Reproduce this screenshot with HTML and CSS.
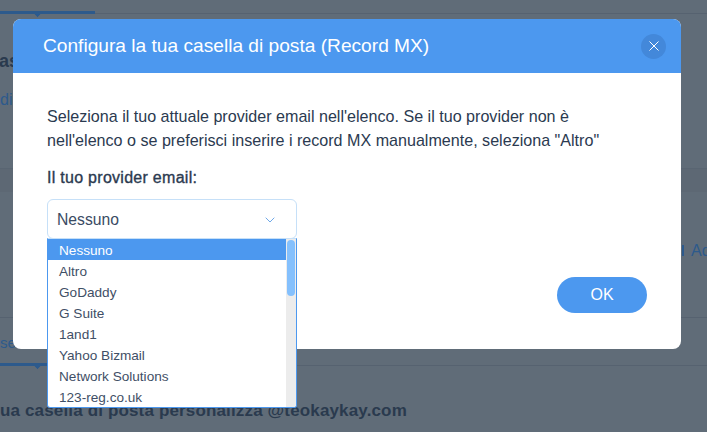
FILE: index.html
```html
<!DOCTYPE html>
<html lang="it">
<head>
<meta charset="utf-8">
<title>Configura la tua casella di posta</title>
<link rel="stylesheet" href="styles.css">
</head>
<body>
<div class="page">
  <div class="tabs tabs-top"><span class="tab-mark tab-mark-top"></span></div>
  <div class="bg-head">as</div>
  <div class="bg-link">di</div>
  <div class="band"></div>
  <div class="bg-row"><span class="bg-tick"></span><span class="bg-add">Add</span></div>
  <div class="bg-foot">se</div>
  <div class="tabs tabs-bottom"><span class="tab-mark tab-mark-bottom"></span></div>
  <div class="bg-title">ua casella di posta personalizza @teokaykay.com</div>
</div>

<section class="modal">
  <header class="modal-header">
    <h1 class="modal-title">Configura la tua casella di posta (Record MX)</h1>
    <button class="close" aria-label="Chiudi">
      <svg class="close-icon" viewBox="0 0 10 10" width="10" height="10"><path d="M0.5 0.5 9.5 9.5M9.5 0.5 0.5 9.5"/></svg>
    </button>
  </header>
  <div class="modal-body">
    <p class="intro">Seleziona il tuo attuale provider email nell'elenco. Se il tuo provider non è<br>nell'elenco o se preferisci inserire i record MX manualmente, seleziona "Altro"</p>
    <div class="label">Il tuo provider email:</div>
    <div class="select">
      <span class="select-value">Nessuno</span>
      <svg class="chevron" viewBox="0 0 10 6" width="10" height="6"><path d="M0.7 0.7 5 5 9.3 0.7"/></svg>
      <div class="dropdown">
        <ul class="options">
          <li class="option selected">Nessuno</li>
          <li class="option">Altro</li>
          <li class="option">GoDaddy</li>
          <li class="option">G Suite</li>
          <li class="option">1and1</li>
          <li class="option">Yahoo Bizmail</li>
          <li class="option">Network Solutions</li>
          <li class="option">123-reg.co.uk</li>
        </ul>
        <div class="scrollbar"><div class="thumb"></div></div>
      </div>
    </div>
    <div class="actions"><button class="ok">OK</button></div>
  </div>
</section>
</body>
</html>
```
FILE: styles.css
```css
html, body {
  margin: 0;
  height: 100%;
  overflow: hidden;
  background: #606c78;
  font-family: "Liberation Sans", Arial, sans-serif;
}
.page {
  height: 432px;
  overflow: hidden;
  color: #2f4058;
}
.tabs {
  position: relative;
  border-bottom: 1px solid #566270;
}
.tabs-top { height: 13px; }
.tabs-bottom { height: 4px; margin-top: 9px; }
.tab-mark {
  position: absolute;
  left: 0;
  bottom: -1px;
  height: 3px;
  background: #2d5a8c;
}
.tab-mark::after {
  content: "";
  position: absolute;
  left: 34px;
  top: -2px;
  width: 7px;
  height: 7px;
  background: #2d5a8c;
  transform: rotate(45deg);
  clip-path: polygon(100% 0, 100% 100%, 0 100%);
}
.tab-mark-top { width: 95px; }
.tab-mark-bottom { width: 48px; }
.bg-head {
  margin-top: 36px;
  font-size: 18px;
  font-weight: 700;
  line-height: 22px;
  color: #2a3a4e;
  margin-left: -1px;
}
.bg-link {
  margin-top: 19px;
  font-size: 16px;
  line-height: 18px;
  color: #2d5a8c;
}
.band {
  height: 24px;
  margin-top: 59px;
  background: #5d6874;
  border-top: 1px solid #596572;
  box-sizing: border-box;
}
.bg-row {
  display: flex;
  justify-content: flex-end;
  align-items: flex-start;
  height: 126px;
  border-bottom: 1px solid #566270;
  box-sizing: border-box;
  padding-top: 50px;
  font-size: 16px;
  line-height: 18px;
  color: #2d5a8c;
  overflow: hidden;
}
.bg-tick {
  flex: none;
  width: 2px;
  height: 11px;
  margin: 3px 7px 0 0;
  background: #2d5a8c;
}
.bg-add {
  flex: none;
  width: 16px;
  overflow: hidden;
}
.bg-foot {
  font-size: 15px;
  line-height: 18px;
  margin-top: 16px;
  color: #2d5a8c;
}
.bg-title {
  margin-top: 34px;
  font-size: 17px;
  font-weight: 700;
  line-height: 22px;
  letter-spacing: 0.15px;
  color: #2a3a4e;
  white-space: nowrap;
}

.modal {
  position: absolute;
  left: 13px;
  top: 19px;
  width: 668px;
  height: 330px;
  background: #fff;
  border-radius: 8px;
}
.modal-header {
  display: flex;
  align-items: center;
  justify-content: space-between;
  height: 54px;
  padding: 0 15px 0 30px;
  background: #4c98ef;
  border-radius: 8px 8px 0 0;
}
.modal-title {
  margin: 0;
  font-size: 19.15px;
  font-weight: 400;
  color: #fff;
}
.close {
  display: flex;
  align-items: center;
  justify-content: center;
  width: 25px;
  height: 25px;
  padding: 0;
  border: 0;
  border-radius: 50%;
  background: #4388da;
}
.close-icon path {
  fill: none;
  stroke: #fff;
  stroke-width: 1;
}
.modal-body {
  padding: 31px 34px 0;
  color: #2b3a50;
}
.intro {
  margin: 0;
  font-size: 16.1px;
  line-height: 24px;
}
.label {
  margin-top: 16px;
  font-size: 16px;
  line-height: 20px;
  letter-spacing: 0.28px;
  -webkit-text-stroke: 0.35px #2b3a50;
}
.select {
  position: relative;
  box-sizing: border-box;
  display: flex;
  align-items: center;
  justify-content: space-between;
  width: 250px;
  height: 40px;
  margin-top: 11px;
  padding: 1px 21px 0 9px;
  border: 1px solid #c6e0f8;
  border-radius: 6px;
  font-size: 15.7px;
  color: #3a4b63;
}
.chevron path {
  fill: none;
  stroke: #6fa8e8;
  stroke-width: 1;
}
.dropdown {
  position: absolute;
  left: -1px;
  top: 38px;
  box-sizing: border-box;
  display: flex;
  width: 250px;
  height: 170px;
  overflow: hidden;
  background: #fff;
  border: 1px solid #4c98ef;
  border-top-color: #c6e0f8;
  border-radius: 0 0 3px 3px;
}
.options {
  flex: 1;
  margin: 0;
  padding: 0;
  list-style: none;
}
.option {
  height: 21px;
  padding-left: 11px;
  font-size: 13.6px;
  line-height: 23px;
  color: #3f4f66;
}
.selected {
  background: #4c98ef;
  color: #fff;
}
.scrollbar {
  box-sizing: border-box;
  width: 10px;
  padding: 1px;
  background: #ececec;
}
.thumb {
  height: 56px;
  border-radius: 4px;
  background: #84c0fd;
}
.actions {
  display: flex;
  justify-content: flex-end;
  margin-top: 38px;
}
.ok {
  width: 90px;
  height: 36px;
  border: 0;
  border-radius: 18px;
  background: #4c98ef;
  color: #fff;
  font-family: inherit;
  font-size: 16px;
}
```
